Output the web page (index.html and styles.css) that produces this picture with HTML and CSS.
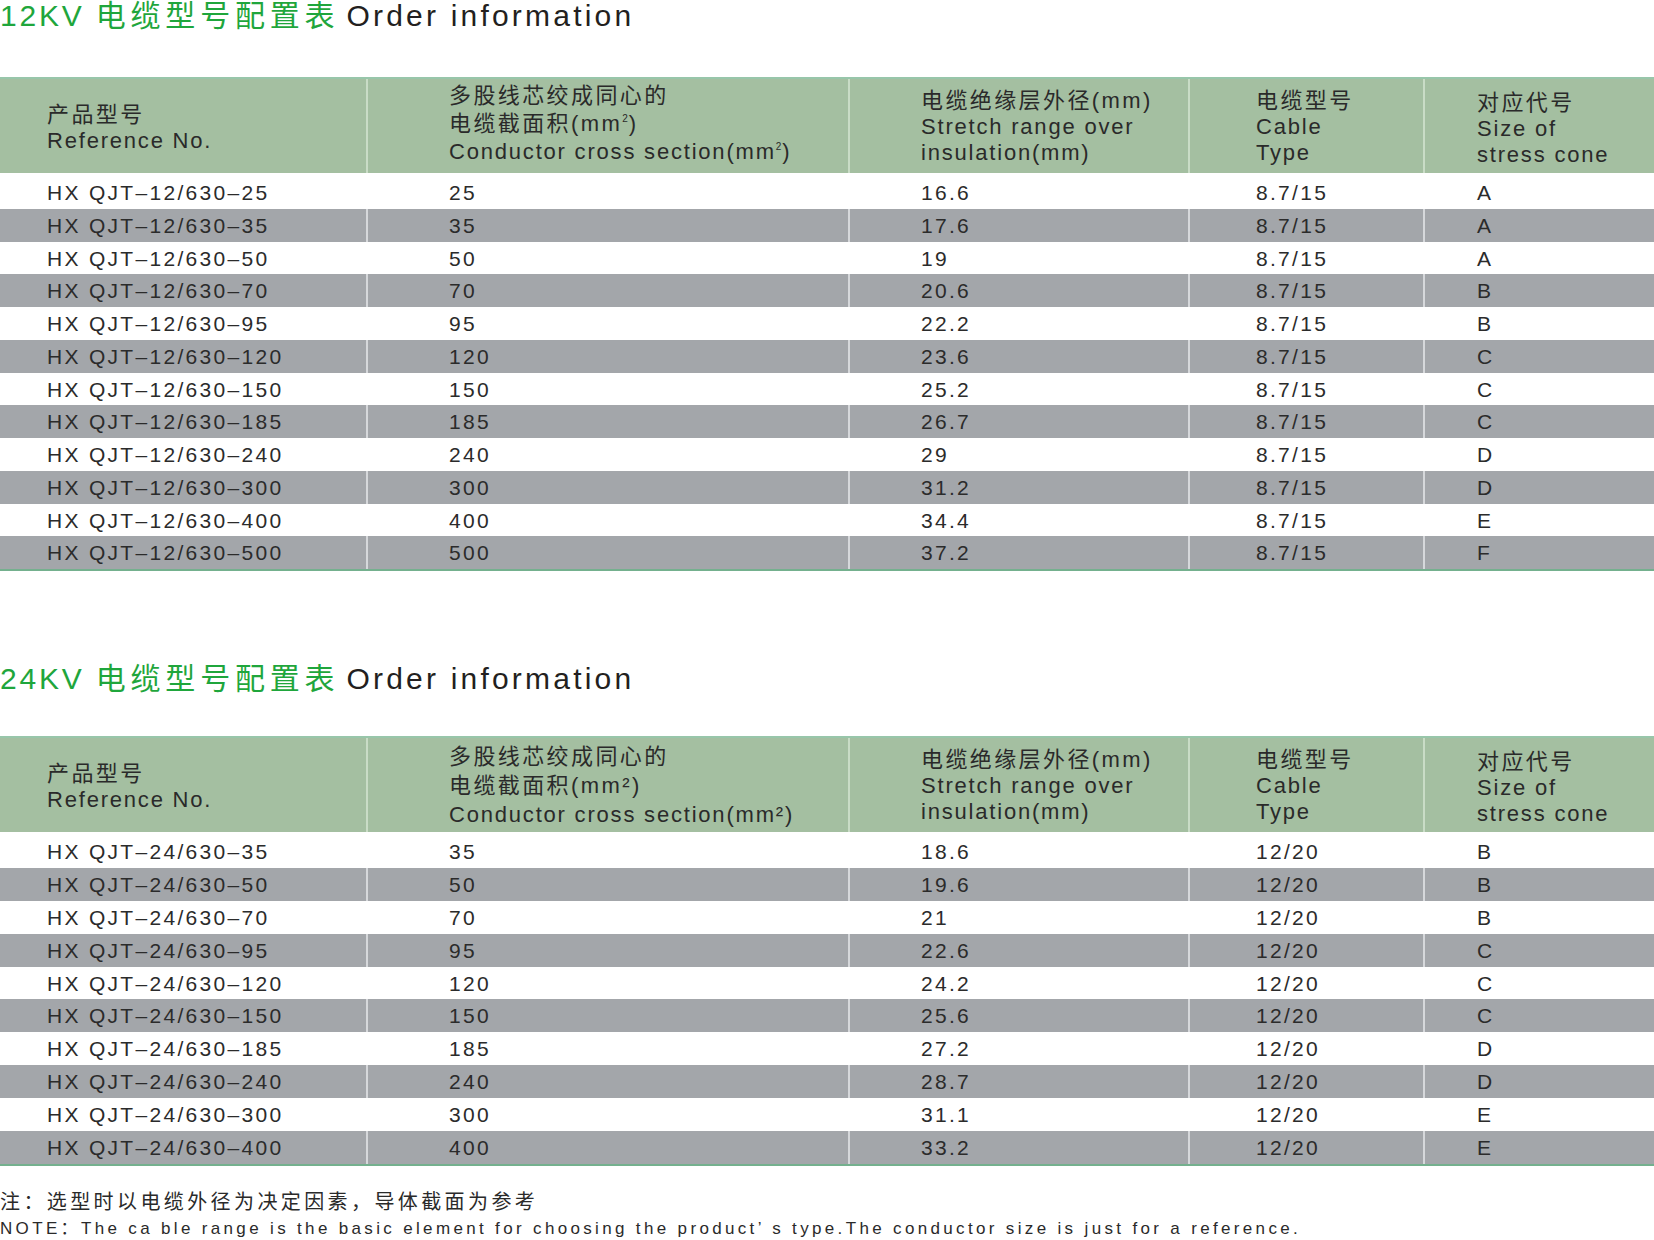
FILE: index.html
```html
<!DOCTYPE html>
<html lang="zh-CN">
<head>
<meta charset="utf-8">
<title>Order information</title>
<link rel="stylesheet" href="styles.css">
</head>
<body>
<div class="page">
  <h2 class="title"><span class="green">12KV <span class="cjk">电缆型号配置表</span></span> <span class="en">Order information</span></h2>
  <div class="table t1">
    <div class="row head">
      <div class="c c1 h h1"><div class="zh">产品型号</div><div>Reference No.</div></div>
      <div class="c c2 h h2"><div class="zh">多股线芯绞成同心的</div><div class="zh">电缆截面积(mm<span class="sup">2</span>)</div><div>Conductor cross section(mm<span class="sup">2</span>)</div></div>
      <div class="c c3 h h3"><div class="zh">电缆绝缘层外径(mm)</div><div>Stretch range over</div><div>insulation(mm)</div></div>
      <div class="c c4 h h3"><div class="zh">电缆型号</div><div>Cable</div><div>Type</div></div>
      <div class="c c5 h h5"><div class="zh">对应代号</div><div>Size of</div><div>stress cone</div></div>
    </div>
    <div class="body b12">
      <div class="row"><div class="c c1">HX QJT–12/630–25</div><div class="c c2">25</div><div class="c c3">16.6</div><div class="c c4">8.7/15</div><div class="c c5">A</div></div>
      <div class="row"><div class="c c1">HX QJT–12/630–35</div><div class="c c2">35</div><div class="c c3">17.6</div><div class="c c4">8.7/15</div><div class="c c5">A</div></div>
      <div class="row"><div class="c c1">HX QJT–12/630–50</div><div class="c c2">50</div><div class="c c3">19</div><div class="c c4">8.7/15</div><div class="c c5">A</div></div>
      <div class="row"><div class="c c1">HX QJT–12/630–70</div><div class="c c2">70</div><div class="c c3">20.6</div><div class="c c4">8.7/15</div><div class="c c5">B</div></div>
      <div class="row"><div class="c c1">HX QJT–12/630–95</div><div class="c c2">95</div><div class="c c3">22.2</div><div class="c c4">8.7/15</div><div class="c c5">B</div></div>
      <div class="row"><div class="c c1">HX QJT–12/630–120</div><div class="c c2">120</div><div class="c c3">23.6</div><div class="c c4">8.7/15</div><div class="c c5">C</div></div>
      <div class="row"><div class="c c1">HX QJT–12/630–150</div><div class="c c2">150</div><div class="c c3">25.2</div><div class="c c4">8.7/15</div><div class="c c5">C</div></div>
      <div class="row"><div class="c c1">HX QJT–12/630–185</div><div class="c c2">185</div><div class="c c3">26.7</div><div class="c c4">8.7/15</div><div class="c c5">C</div></div>
      <div class="row"><div class="c c1">HX QJT–12/630–240</div><div class="c c2">240</div><div class="c c3">29</div><div class="c c4">8.7/15</div><div class="c c5">D</div></div>
      <div class="row"><div class="c c1">HX QJT–12/630–300</div><div class="c c2">300</div><div class="c c3">31.2</div><div class="c c4">8.7/15</div><div class="c c5">D</div></div>
      <div class="row"><div class="c c1">HX QJT–12/630–400</div><div class="c c2">400</div><div class="c c3">34.4</div><div class="c c4">8.7/15</div><div class="c c5">E</div></div>
      <div class="row"><div class="c c1">HX QJT–12/630–500</div><div class="c c2">500</div><div class="c c3">37.2</div><div class="c c4">8.7/15</div><div class="c c5">F</div></div>
    </div>
  </div>

  <h2 class="title title2"><span class="green">24KV <span class="cjk">电缆型号配置表</span></span> <span class="en">Order information</span></h2>
  <div class="table t2">
    <div class="row head">
      <div class="c c1 h h1"><div class="zh">产品型号</div><div>Reference No.</div></div>
      <div class="c c2 h h2b"><div class="zh">多股线芯绞成同心的</div><div class="zh">电缆截面积(mm²)</div><div>Conductor cross section(mm²)</div></div>
      <div class="c c3 h h3"><div class="zh">电缆绝缘层外径(mm)</div><div>Stretch range over</div><div>insulation(mm)</div></div>
      <div class="c c4 h h3"><div class="zh">电缆型号</div><div>Cable</div><div>Type</div></div>
      <div class="c c5 h h5"><div class="zh">对应代号</div><div>Size of</div><div>stress cone</div></div>
    </div>
    <div class="body b24">
      <div class="row"><div class="c c1">HX QJT–24/630–35</div><div class="c c2">35</div><div class="c c3">18.6</div><div class="c c4">12/20</div><div class="c c5">B</div></div>
      <div class="row"><div class="c c1">HX QJT–24/630–50</div><div class="c c2">50</div><div class="c c3">19.6</div><div class="c c4">12/20</div><div class="c c5">B</div></div>
      <div class="row"><div class="c c1">HX QJT–24/630–70</div><div class="c c2">70</div><div class="c c3">21</div><div class="c c4">12/20</div><div class="c c5">B</div></div>
      <div class="row"><div class="c c1">HX QJT–24/630–95</div><div class="c c2">95</div><div class="c c3">22.6</div><div class="c c4">12/20</div><div class="c c5">C</div></div>
      <div class="row"><div class="c c1">HX QJT–24/630–120</div><div class="c c2">120</div><div class="c c3">24.2</div><div class="c c4">12/20</div><div class="c c5">C</div></div>
      <div class="row"><div class="c c1">HX QJT–24/630–150</div><div class="c c2">150</div><div class="c c3">25.6</div><div class="c c4">12/20</div><div class="c c5">C</div></div>
      <div class="row"><div class="c c1">HX QJT–24/630–185</div><div class="c c2">185</div><div class="c c3">27.2</div><div class="c c4">12/20</div><div class="c c5">D</div></div>
      <div class="row"><div class="c c1">HX QJT–24/630–240</div><div class="c c2">240</div><div class="c c3">28.7</div><div class="c c4">12/20</div><div class="c c5">D</div></div>
      <div class="row"><div class="c c1">HX QJT–24/630–300</div><div class="c c2">300</div><div class="c c3">31.1</div><div class="c c4">12/20</div><div class="c c5">E</div></div>
      <div class="row"><div class="c c1">HX QJT–24/630–400</div><div class="c c2">400</div><div class="c c3">33.2</div><div class="c c4">12/20</div><div class="c c5">E</div></div>
    </div>
  </div>

  <div class="note">
    <div class="note-zh">注：选型时以电缆外径为决定因素，导体截面为参考</div>
    <div class="note-en">NOTE：The ca ble range is the basic element for choosing the product’ s type.The conductor size is just for a reference.</div>
  </div>
</div>
</body>
</html>
```

FILE: styles.css
```css
html, body {
  margin: 0;
  padding: 0;
  background: #ffffff;
}

body {
  width: 1654px;
  height: 1240px;
  overflow: hidden;
  font-family: "Liberation Sans", "Noto Sans CJK SC", sans-serif;
  color: #2a2a2a;
}

.page {
  display: flex;
  flex-direction: column;
}

.title {
  margin: 0;
  height: 32px;
  font-size: 30px;
  line-height: 32px;
  font-weight: normal;
  letter-spacing: 2.8px;
  color: #231f20;
  white-space: nowrap;
}

.title .green {
  color: #1fa63c;
}

.title .cjk {
  letter-spacing: 4.8px;
}

.title .en {
  margin-left: -4px;
  letter-spacing: 3.2px;
}

.title2 {
  margin-top: 92px;
}

.table {
  margin-top: 45px;
  border-top: 2px solid #98c6aa;
  border-bottom: 2px solid #74b08e;
}

.t2 {
  margin-top: 41px;
}

.row {
  display: grid;
  grid-template-columns: 366px 482px 340px 235px 231px;
}

.c {
  font-size: 21px;
  letter-spacing: 2.3px;
  white-space: nowrap;
  color: #2b2b2b;
}

.c2, .c3, .c4, .c5 {
  border-left: 2px solid transparent;
}

.c1 { padding-left: 47px; }
.c2 { padding-left: 81px; }
.c3 { padding-left: 71px; }
.c4 { padding-left: 66px; }
.c5 { padding-left: 52px; }

/* header */
.head {
  height: 94px;
  background: #a4bfa1;
  border-bottom: 3px solid #ffffff;
}

.head .c2, .head .c3, .head .c4, .head .c5 {
  border-left-color: #c9dcc6;
}

.h {
  display: flex;
  flex-direction: column;
  justify-content: center;
  font-size: 22px;
  line-height: 26px;
  letter-spacing: 1.8px;
  padding-top: 2px;
  box-sizing: border-box;
  color: #2a2a2a;
}

.h .zh {
  letter-spacing: 2.4px;
}

.h1 {
  padding-top: 4px;
}

.h2 {
  line-height: 28px;
  padding-top: 0;
  padding-bottom: 5px;
}

.h2b {
  line-height: 29px;
  padding-top: 0;
  padding-bottom: 0;
}

.h5 {
  padding-top: 5px;
}

.sup {
  font-size: 10px;
  vertical-align: 9px;
  line-height: 0;
  letter-spacing: 1px;
}

/* body rows */
.body .c {
  padding-top: 1px;
}

.b12 .row {
  height: 32.75px;
  line-height: 31.75px;
}

.b24 .row {
  height: 32.9px;
  line-height: 31.9px;
}

.body .row:nth-child(even) {
  background: #a3a6aa;
}

.body .row:nth-child(even) .c2,
.body .row:nth-child(even) .c3,
.body .row:nth-child(even) .c4,
.body .row:nth-child(even) .c5 {
  border-left-color: #d6d8db;
}

/* note */
.note {
  margin-top: 23px;
  white-space: nowrap;
}

.note-zh {
  font-size: 20px;
  line-height: 27px;
  letter-spacing: 3.4px;
  color: #2a2a2a;
}

.note-en {
  font-size: 17px;
  line-height: 26px;
  letter-spacing: 3.34px;
  color: #2a2a2a;
}
```
